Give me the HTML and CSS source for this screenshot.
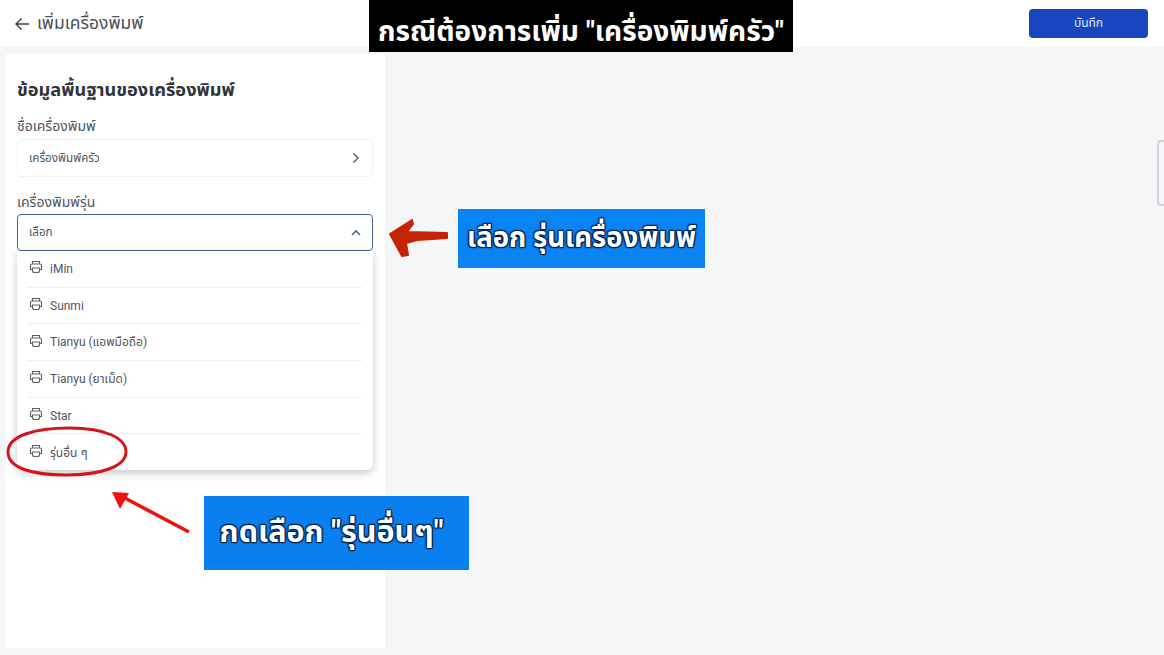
FILE: index.html
```html
<!DOCTYPE html>
<html lang="th">
<head>
  <meta charset="UTF-8" />
  <title>เพิ่มเครื่องพิมพ์</title>
  <link rel="stylesheet" href="styles.css">
</head>
<body>
  <header class="topbar">
    <div class="topbar-title">
      <svg class="back-icon" width="16" height="16" viewBox="0 0 16 16"><path d="M15 8H2M7.500 2.500 2 8l5.500 5.500" /></svg>
      <span>เพิ่มเครื่องพิมพ์</span>
    </div>
    <button class="save-btn">บันทึก</button>
  </header>

  <main class="content">
    <section class="panel">
      <h1>ข้อมูลพื้นฐานของเครื่องพิมพ์</h1>

      <label class="field-label">ชื่อเครื่องพิมพ์</label>
      <div class="field">
        <span>เครื่องพิมพ์ครัว</span>
        <svg class="chev" width="12" height="12" viewBox="0 0 12 12"><path d="M3.500 1.500 8 6l-4.500 4.500" /></svg>
      </div>

      <label class="field-label second">เครื่องพิมพ์รุ่น</label>
      <div class="field open">
        <span>เลือก</span>
        <svg class="chev" width="12" height="12" viewBox="0 0 12 12"><path d="M2 8l4-4 4 4" /></svg>
      </div>

      <ul class="dropdown">
        <li><svg class="printer" width="14" height="14" viewBox="0 0 14 14"><path d="M3.500 4V1.500h7V4M3.500 9.500H1.500V5.500Q1.500 4 3 4h8q1.500 0 1.500 1.500v4h-2M3.500 8h7v2.500q0 2-2 2h-3q-2 0-2-2z" /></svg>iMin</li>
        <li><svg class="printer" width="14" height="14" viewBox="0 0 14 14"><path d="M3.500 4V1.500h7V4M3.500 9.500H1.500V5.500Q1.500 4 3 4h8q1.500 0 1.500 1.500v4h-2M3.500 8h7v2.500q0 2-2 2h-3q-2 0-2-2z" /></svg>Sunmi</li>
        <li><svg class="printer" width="14" height="14" viewBox="0 0 14 14"><path d="M3.500 4V1.500h7V4M3.500 9.500H1.500V5.500Q1.500 4 3 4h8q1.500 0 1.500 1.500v4h-2M3.500 8h7v2.500q0 2-2 2h-3q-2 0-2-2z" /></svg>Tianyu (แอพมือถือ)</li>
        <li><svg class="printer" width="14" height="14" viewBox="0 0 14 14"><path d="M3.500 4V1.500h7V4M3.500 9.500H1.500V5.500Q1.500 4 3 4h8q1.500 0 1.500 1.500v4h-2M3.500 8h7v2.500q0 2-2 2h-3q-2 0-2-2z" /></svg>Tianyu (ยาเม็ด)</li>
        <li><svg class="printer" width="14" height="14" viewBox="0 0 14 14"><path d="M3.500 4V1.500h7V4M3.500 9.500H1.500V5.500Q1.500 4 3 4h8q1.500 0 1.500 1.500v4h-2M3.500 8h7v2.500q0 2-2 2h-3q-2 0-2-2z" /></svg>Star</li>
        <li><svg class="printer" width="14" height="14" viewBox="0 0 14 14"><path d="M3.500 4V1.500h7V4M3.500 9.500H1.500V5.500Q1.500 4 3 4h8q1.500 0 1.500 1.500v4h-2M3.500 8h7v2.500q0 2-2 2h-3q-2 0-2-2z" /></svg>รุ่นอื่น ๆ</li>
      </ul>
    </section>
  </main>

  <div class="side-tab"></div>

  <!-- annotations drawn over the screenshot -->
  <div class="note note-top">กรณีต้องการเพิ่ม "เครื่องพิมพ์ครัว"</div>
  <div class="note note-model">เลือก รุ่นเครื่องพิมพ์</div>
  <div class="note note-other">กดเลือก "รุ่นอื่นๆ"</div>

  <svg class="overlay" width="1164" height="655" viewBox="0 0 1164 655">
    <path class="ring" d="M8 452C8 436 34 428 70 428 105 428 126 438 126 452 126 466 102 475 66 475 32 475 8 468 8 452z" />
    <path class="arrow-thin" d="M189 532 121 496" />
    <path class="arrow-thin-head" d="M112 492 129 493 120 509z" />
    <path class="arrow-fat" d="M390 234 412 220 413 224 407 232 447 233 447 238 417 240 406 243 408 255 402 256z" />
  </svg>
</body>
</html>
```

FILE: styles.css
```css
* {
  margin: 0;
  padding: 0;
  box-sizing: border-box;
}

body {
  width: 1164px;
  height: 655px;
  overflow: hidden;
  position: relative;
  font-family: Roboto, "Noto Sans", "Noto Sans Thai", sans-serif;
  background-color: #f5f6f8;
  color: #33383f;
}

.topbar {
  height: 47px;
  background-color: #fff;
  display: flex;
  justify-content: space-between;
  align-items: center;
  padding: 0 16px 0 14px;
}

.topbar-title {
  display: flex;
  align-items: center;
  gap: 7px;
  font-size: 17.500px;
  color: #4a4f57;
}

.back-icon path {
  fill: none;
  stroke: #3b4048;
  stroke-width: 1.400;
}

.save-btn {
  width: 119px;
  height: 29px;
  margin-top: -1px;
  background-color: #1746c0;
  color: #dfe7fa;
  border: none;
  border-radius: 4px;
  font-family: inherit;
  font-size: 12px;
}

.content {
  padding: 7px 0 0 6px;
}

.panel {
  width: 379px;
  height: 594px;
  background-color: #fff;
  padding: 24px 12px 0 11px;
}

h1 {
  font-size: 18.200px;
  font-weight: 700;
  line-height: 24px;
  color: #2f343a;
  margin-bottom: 14px;
}

.field-label {
  display: block;
  font-size: 14px;
  line-height: 20px;
  color: #50555c;
  margin-bottom: 3px;
}

.field-label.second {
  margin-top: 15px;
  margin-bottom: 2px;
}

.field {
  height: 38px;
  border: 1px solid #f0f1f3;
  border-radius: 4px;
  display: flex;
  justify-content: space-between;
  align-items: center;
  padding: 0 10px 0 11px;
  font-size: 11.600px;
  color: #50555c;
}

.field.open {
  height: 37px;
  border: 1.500px solid #4a6390;
}

.chev path {
  fill: none;
  stroke: #4a5058;
  stroke-width: 1.200;
}

.field.open .chev path {
  stroke: #4a6a8c;
  stroke-width: 1.600;
}

.dropdown {
  list-style: none;
  width: 356px;
  height: 219px;
  background-color: #fff;
  border-radius: 0 0 6px 6px;
  box-shadow: 0 3px 9px rgba(0, 0, 0, 0.22);
  padding: 0 11px;
}

.dropdown li {
  height: 36.700px;
  display: flex;
  align-items: center;
  gap: 7px;
  padding-left: 1px;
  font-size: 12px;
  color: #50555c;
  border-bottom: 1px solid #eceef0;
}

.dropdown li:last-child {
  border-bottom: none;
}

.printer {
  margin-top: -3px;
}

.printer path {
  fill: none;
  stroke: #5c6168;
  stroke-width: 1.100;
}

.side-tab {
  position: absolute;
  top: 140px;
  left: 1157px;
  width: 7px;
  height: 66px;
  border: 2px solid #d2d5d9;
  border-right: none;
  border-radius: 4px 0 0 4px;
}

.note {
  position: absolute;
  display: flex;
  align-items: center;
  justify-content: center;
  color: #fff;
  font-weight: 700;
  white-space: nowrap;
}

.note-top {
  top: 0;
  left: 369px;
  width: 424px;
  height: 52px;
  padding-top: 12px;
  background-color: #000;
  font-size: 28px;
}

.note-model {
  top: 209px;
  left: 458px;
  width: 247px;
  height: 59px;
  background-color: #0a84f5;
  font-size: 27.500px;
  text-shadow: 0 0 2px #00204a, 1px 1px 1px #00204a, -1px -1px 1px #00204a, 1px -1px 1px #00204a, -1px 1px 1px #00204a;
}

.note-other {
  top: 496px;
  left: 204px;
  width: 265px;
  height: 74px;
  padding-right: 10px;
  background-color: #0a7ff0;
  font-size: 30.500px;
  text-shadow: 0 0 2px #00204a, 1px 1px 1px #00204a, -1px -1px 1px #00204a, 1px -1px 1px #00204a, -1px 1px 1px #00204a;
}

.overlay {
  position: absolute;
  top: 0;
  left: 0;
  pointer-events: none;
}

.ring {
  fill: none;
  stroke: #d0161b;
  stroke-width: 3;
}

.arrow-thin {
  stroke: #ee1111;
  stroke-width: 3.500;
}

.arrow-thin-head {
  fill: #ee1111;
}

.arrow-fat {
  fill: #c42404;
  stroke: #c42404;
  stroke-width: 2;
  stroke-linejoin: round;
}
```
